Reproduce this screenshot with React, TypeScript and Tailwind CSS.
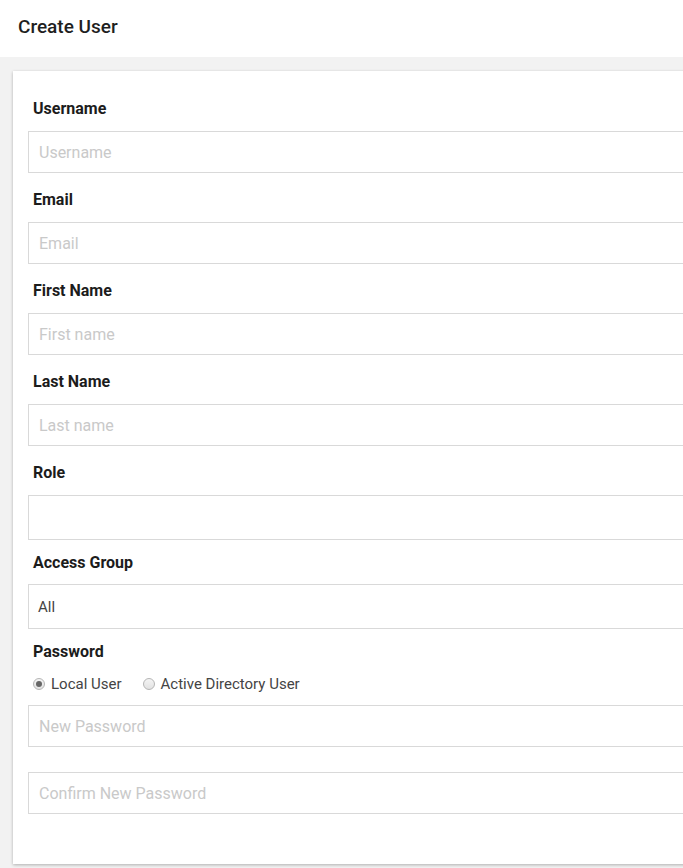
import type { ReactNode } from "react";

const FONT = { fontFamily: "Roboto, 'Noto Sans', Arial, sans-serif" };

function Label({ children, gap = "mb-[12px]" }: { children: ReactNode; gap?: string }) {
  return (
    <div className={`pl-[5px] text-[16px] leading-[20px] font-bold text-[#1c1c1c] ${gap}`}>
      {children}
    </div>
  );
}

function TextInput({ placeholder, type = "text" }: { placeholder: string; type?: string }) {
  return (
    <input
      type={type}
      placeholder={placeholder}
      className="block w-full h-[42px] border border-[#d9d9d9] bg-white pl-[10px] pt-[1px] text-[16px] text-[#444] placeholder:text-[#c9c9c9] outline-none"
    />
  );
}

function SelectBox({ value }: { value: string }) {
  return (
    <div className="w-full h-[45px] border border-[#d9d9d9] bg-white pl-[9px] pt-[1px] flex items-center text-[15px] text-[#444]">
      {value}
    </div>
  );
}

function Radio({ checked, label }: { checked?: boolean; label: string }) {
  return (
    <label className="flex items-center gap-[6px] text-[15px] leading-[20px] text-[#444]">
      <span className="w-[12px] h-[12px] rounded-full border border-[#b5b5b5] bg-gradient-to-b from-[#f4f4f4] to-[#e2e2e2] flex items-center justify-center">
        {checked && <span className="w-[6px] h-[6px] rounded-full bg-[#666]" />}
      </span>
      {label}
    </label>
  );
}

export default function App() {
  const fields = [
    { label: "Username", placeholder: "Username" },
    { label: "Email", placeholder: "Email" },
    { label: "First Name", placeholder: "First name" },
    { label: "Last Name", placeholder: "Last name" },
  ];

  return (
    <div className="min-h-screen bg-[#f2f2f2] overflow-hidden" style={FONT}>
      {/* Page header */}
      <header className="h-[57px] bg-white pl-[18px] pt-[15px]">
        <h1 className="text-[19px] leading-[24px] font-medium text-[#1f1f1f]">Create User</h1>
      </header>

      {/* Form card */}
      <div className="ml-[13px] mt-[14px] w-[740px] bg-white shadow-[0_1px_3px_rgba(0,0,0,0.28)] pt-[28px] pb-[50px] px-[15px]">
        {fields.map((f) => (
          <div key={f.label} className="mb-[17px]">
            <Label>{f.label}</Label>
            <TextInput placeholder={f.placeholder} />
          </div>
        ))}

        <div className="mb-[13px]">
          <Label>Role</Label>
          <SelectBox value="" />
        </div>

        <div className="mb-[13px]">
          <Label gap="mb-[11px]">Access Group</Label>
          <SelectBox value="All" />
        </div>

        <div>
          <Label>Password</Label>
          <div className="pl-[5px] flex items-center gap-[21px] mb-[11px]">
            <Radio checked label="Local User" />
            <Radio label="Active Directory User" />
          </div>
          <div className="mb-[25px]">
            <TextInput type="password" placeholder="New Password" />
          </div>
          <TextInput type="password" placeholder="Confirm New Password" />
        </div>
      </div>
    </div>
  );
}
